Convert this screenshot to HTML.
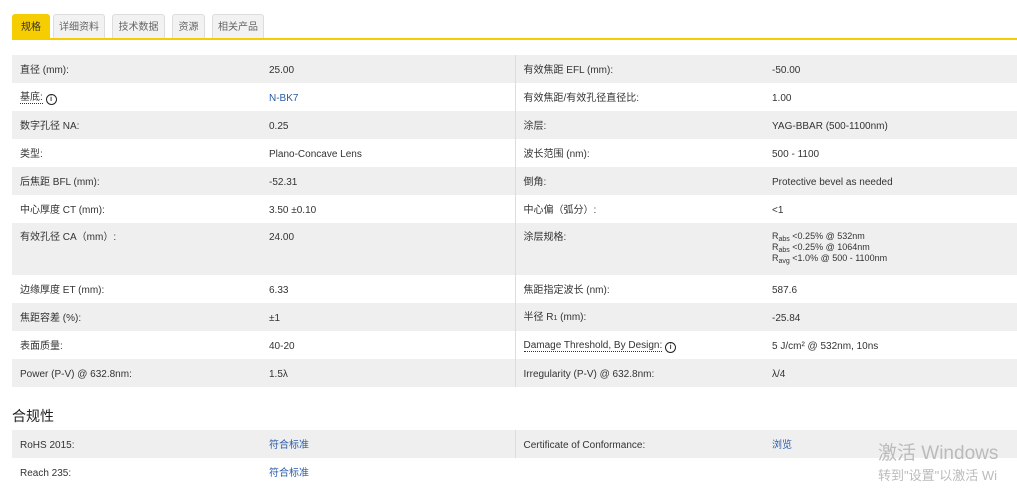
<!DOCTYPE html>
<html><head><meta charset="utf-8"><style>
body{margin:0;background:#fff;font-family:"Liberation Sans","Noto Sans CJK SC",sans-serif;font-size:10px;color:#333;width:1017px;height:497px;overflow:hidden;position:relative}
.tabs{position:absolute;top:14px;left:12px;height:24px;width:1005px;border-bottom:2px solid #f5cd00}
.tab{position:absolute;top:0;height:24px;line-height:26px;text-align:center;background:#f2f2f2;border:1px solid #ddd;border-bottom:none;border-radius:3px 3px 0 0;color:#666;font-size:10px;box-sizing:border-box}
.tab.a{background:#f5cd00;border-color:#f5cd00;color:#333}
table{position:absolute;left:12px;width:1005px;border-collapse:collapse;table-layout:fixed}
td{padding:3px 8px 0;height:28px;vertical-align:middle;box-sizing:border-box;line-height:12px}
tr:nth-child(odd) td{background:#efefef}
td.c2{border-right:1px solid #ddd}
a{color:#2a5aa8;text-decoration:none}
.u{border-bottom:1px dotted #333}
.i{display:inline-block;width:9px;height:9px;border:1.5px solid #222;border-radius:50%;font-size:7px;line-height:9px;text-align:center;font-weight:bold;vertical-align:-1px}
sub{font-size:7px;line-height:0;vertical-align:-2px}
h3{position:absolute;left:12px;top:406px;margin:0;font-size:14px;font-weight:normal;color:#222}
.wm{position:absolute;color:#bbb}
</style></head><body>
<div class="tabs">
<div class="tab a" style="left:0;width:38px">规格</div>
<div class="tab" style="left:41px;width:52px">详细资料</div>
<div class="tab" style="left:100px;width:53px">技术数据</div>
<div class="tab" style="left:160px;width:33px">资源</div>
<div class="tab" style="left:200px;width:52px">相关产品</div>
</div>
<table style="top:55px">
<colgroup><col style="width:249px"><col style="width:254px"><col style="width:249px"><col></colgroup>
<tr><td class="c1">直径 (mm):</td><td class="c2">25.00</td><td class="c3">有效焦距 EFL (mm):</td><td>-50.00</td></tr>
<tr><td class="c1"><span class="u">基底:</span> <span class="i">i</span></td><td class="c2"><a>N-BK7</a></td><td class="c3">有效焦距/有效孔径直径比:</td><td>1.00</td></tr>
<tr><td class="c1">数字孔径 NA:</td><td class="c2">0.25</td><td class="c3">涂层:</td><td>YAG-BBAR (500-1100nm)</td></tr>
<tr><td class="c1">类型:</td><td class="c2">Plano-Concave Lens</td><td class="c3">波长范围 (nm):</td><td>500 - 1100</td></tr>
<tr><td class="c1">后焦距 BFL (mm):</td><td class="c2">-52.31</td><td class="c3">倒角:</td><td>Protective bevel as needed</td></tr>
<tr><td class="c1">中心厚度 CT (mm):</td><td class="c2">3.50 ±0.10</td><td class="c3">中心偏（弧分）:</td><td>&lt;1</td></tr>
<tr style="height:52px"><td class="c1" style="height:52px;vertical-align:top;padding-top:9px">有效孔径 CA（mm）:</td><td class="c2" style="vertical-align:top;padding-top:9px">24.00</td><td class="c3" style="vertical-align:top;padding-top:9px">涂层规格:</td><td style="font-size:9px;line-height:11px;vertical-align:top;padding-top:8px">R<sub>abs</sub> &lt;0.25% @ 532nm<br>R<sub>abs</sub> &lt;0.25% @ 1064nm<br>R<sub>avg</sub> &lt;1.0% @ 500 - 1100nm</td></tr>
<tr><td class="c1">边缘厚度 ET (mm):</td><td class="c2">6.33</td><td class="c3">焦距指定波长 (nm):</td><td>587.6</td></tr>
<tr><td class="c1">焦距容差 (%):</td><td class="c2">±1</td><td class="c3">半径 R<span style="font-size:7px">1</span> (mm):</td><td>-25.84</td></tr>
<tr><td class="c1">表面质量:</td><td class="c2">40-20</td><td class="c3"><span class="u">Damage Threshold, By Design:</span> <span class="i">i</span></td><td>5 J/cm² @ 532nm, 10ns</td></tr>
<tr><td class="c1">Power (P-V) @ 632.8nm:</td><td class="c2">1.5λ</td><td class="c3">Irregularity (P-V) @ 632.8nm:</td><td>λ/4</td></tr>
</table>
<h3>合规性</h3>
<table style="top:430px">
<colgroup><col style="width:249px"><col style="width:254px"><col style="width:249px"><col></colgroup>
<tr><td class="c1">RoHS 2015:</td><td class="c2"><a>符合标准</a></td><td class="c3">Certificate of Conformance:</td><td><a>浏览</a></td></tr>
<tr><td class="c1">Reach 235:</td><td class="c2" style="border-right:none"><a>符合标准</a></td><td class="c3"></td><td></td></tr>
</table>
<div class="wm" style="left:878px;top:438px;font-size:19px">激活 Windows</div>
<div class="wm" style="left:878px;top:465px;font-size:13px">转到"设置"以激活 Wi</div>
</body></html>
